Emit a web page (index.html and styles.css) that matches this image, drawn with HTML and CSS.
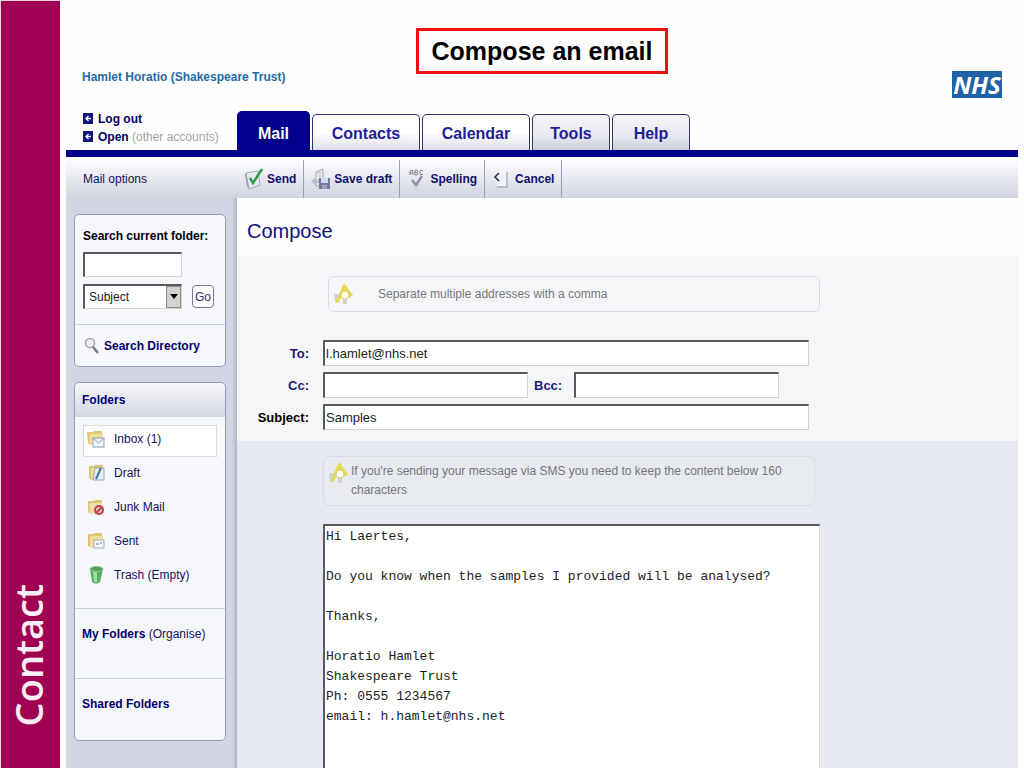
FILE: index.html
```html
<!DOCTYPE html>
<html lang="en">
<head>
    <meta charset="UTF-8">
    <meta name="viewport" content="width=device-width, initial-scale=1.0">
    <title>Compose an email</title>
    <link rel="stylesheet" href="styles.css">
</head>
<body>
    <!-- Section rail -->
    <aside class="rail"><span class="rail-text">Contact</span></aside>

    <div class="app">
        <!-- Header: user, page callout, logo -->
        <header class="top">
            <p class="user">Hamlet Horatio (Shakespeare Trust)</p>
            <h1 class="callout">Compose an email</h1>
            <div class="nhs">NHS</div>
        </header>

        <div class="nav-row">
            <div class="account">
                <a href="#"><svg class="arrow" viewBox="0 0 10 11"><rect width="10" height="11" fill="#14147c"/><path d="M8 5.500H3M5.500 3L3 5.500L5.500 8" fill="none" stroke="#fff" stroke-width="1.300"/></svg><b>Log out</b></a>
                <a href="#"><svg class="arrow" viewBox="0 0 10 11"><rect width="10" height="11" fill="#14147c"/><path d="M8 5.500H3M5.500 3L3 5.500L5.500 8" fill="none" stroke="#fff" stroke-width="1.300"/></svg><b>Open</b> <span>(other accounts)</span></a>
            </div>
            <nav class="tabs">
                <a class="tab tab-active" href="#">Mail</a>
                <a class="tab tab-wide" href="#">Contacts</a>
                <a class="tab tab-wide" href="#">Calendar</a>
                <a class="tab tab-grey" href="#">Tools</a>
                <a class="tab tab-grey" href="#">Help</a>
            </nav>
        </div>

        <!-- Toolbar -->
        <div class="toolbar">
            <a class="options" href="#">Mail options</a>
            <button class="tool" type="button">
                <svg class="tool-icon" viewBox="0 0 20 24"><path d="M2 6L14 4L16 18L5 22Z" fill="#e6e9ee" stroke="#a4a9b5"/><path d="M2 6L5 22L3 19L1 8Z" fill="#999faa"/><path d="M6 11L9 16L18 2" fill="none" stroke="#2f9a4c" stroke-width="2.500"/></svg>
                Send
            </button>
            <button class="tool" type="button">
                <svg class="tool-icon" viewBox="0 0 20 24"><path d="M5 5L12 2V19H5Z" fill="#eceef2" stroke="#9ea3ae"/><path d="M7 6H10M7 9H10M7 12H10" stroke="#a5aab4"/><path d="M0 14L5 10V13H9V16H5V19Z" fill="#b9bec8"/><rect x="8" y="11" width="11" height="11" fill="#737aa6"/><rect x="10" y="11" width="7" height="5" fill="#d3d6e5"/><rect x="11" y="18" width="5" height="4" fill="#9ba1bf"/></svg>
                Save draft
            </button>
            <button class="tool" type="button">
                <svg class="tool-icon" viewBox="0 0 20 24"><path d="M3 8V4L5 3L6 4V8M3 6H6M8 3V8H10L11 7L10 5.500H8M8 3H10L11 4L10 5.500M16 4L14 3L13 4V7L14 8L16 7" fill="none" stroke="#84878f"/><path d="M5 13L9 18L15 9" fill="none" stroke="#8990a3" stroke-width="2.500"/><path d="M6 18L9 21L13 17" fill="none" stroke="#d0d3da" stroke-width="2"/></svg>
                Spelling
            </button>
            <button class="tool" type="button">
                <svg class="tool-icon" viewBox="0 0 20 24"><path d="M4 4H15V19H5Z" fill="#f2f3f7"/><path d="M15 5V20H5" fill="none" stroke="#aeb3c0" stroke-width="1.500"/><path d="M7 6L3 10L7 14" fill="none" stroke="#22266b" stroke-width="1.500"/></svg>
                Cancel
            </button>
        </div>

        <div class="columns">
            <!-- Sidebar -->
            <div class="sidebar">
                <form class="panel">
                    <div class="search">
                        <label for="search">Search current folder:</label>
                        <input class="field search-field" type="text" id="search">
                        <div class="search-row">
                            <div class="select-wrap">
                                <select class="field" aria-label="Search in">
                                    <option>Subject</option>
                                    <option>Sender</option>
                                </select>
                                <span class="select-arrow"></span>
                            </div>
                            <button class="go" type="button">Go</button>
                        </div>
                    </div>
                    <a class="directory" href="#">
                        <svg class="lens" viewBox="0 0 16 18"><circle cx="6" cy="6" r="4.500" fill="#eef2f5" stroke="#a1a5ab" stroke-width="1.500"/><path d="M9 10L14 16" stroke="#777b80" stroke-width="2.500"/></svg>
                        Search Directory
                    </a>
                </form>

                <div class="panel">
                    <h2 class="panel-title">Folders</h2>
                    <ul class="folders">
                        <li class="current"><a href="#">
                            <svg class="folder-icon" viewBox="0 0 20 20"><path d="M1 3H6L8 2H16V13L4 16L2 14Z" fill="#e2ca78"/><path d="M4 5H17V14L4 16Z" fill="#f0dea0"/><rect x="7" y="9" width="11" height="9" fill="#eef4fb" stroke="#8aa0bd"/><path d="M7 9L12.500 14L18 9" fill="none" stroke="#8aa0bd"/></svg>
                            Inbox (1)</a></li>
                        <li><a href="#">
                            <svg class="folder-icon" viewBox="0 0 20 20"><path d="M3 3H7L9 2H17V14L5 17L3 15Z" fill="#dcc474"/><path d="M5 5H12V16L5 17Z" fill="#f0dea0"/><path d="M9 5H18V17H7Z" fill="#e6eef3" stroke="#9ba9ae"/><path d="M10 16L15 5" stroke="#2d7e92" stroke-width="2"/></svg>
                            Draft</a></li>
                        <li><a href="#">
                            <svg class="folder-icon" viewBox="0 0 20 20"><path d="M2 4H7L9 3H16V15H4L2 16Z" fill="#dcc474"/><path d="M4 6H16V16L3 17Z" fill="#efdda3"/><rect x="8" y="8" width="10" height="10" fill="#e7dce0"/><circle cx="13" cy="13" r="4" fill="#efc7c5" stroke="#c3444a" stroke-width="2"/><path d="M10 16L16 10" stroke="#c3444a" stroke-width="2"/></svg>
                            Junk Mail</a></li>
                        <li><a href="#">
                            <svg class="folder-icon" viewBox="0 0 20 20"><path d="M2 3H7L9 2H16V14L4 16L2 15Z" fill="#dcc474"/><path d="M4 5H17V15L4 17Z" fill="#f0dea0"/><rect x="8" y="9" width="10" height="8" fill="#f6f8fb" stroke="#9aabb8"/><path d="M10 13H13M15 11V13" stroke="#4c6e94"/></svg>
                            Sent</a></li>
                        <li><a href="#">
                            <svg class="folder-icon" viewBox="0 0 20 20"><path d="M4 4L6 17Q10 20 14 17L17 4Z" fill="#58ae60"/><path d="M7 7L8 17H11L11 7Z" fill="#a2dda0"/><ellipse cx="10.500" cy="4" rx="6.500" ry="2.500" fill="#5b9e60" stroke="#8aca88"/></svg>
                            Trash (Empty)</a></li>
                    </ul>
                    <div class="group"><a href="#"><b>My Folders</b> (Organise)</a></div>
                    <div class="group"><a href="#"><b>Shared Folders</b></a></div>
                </div>
            </div>

            <!-- Compose form -->
            <form class="compose">
                <h2 class="compose-title">Compose</h2>

                <div class="recipients">
                    <p class="hint hint-address">
                        <svg class="bulb" viewBox="0 0 20 22"><path d="M0 11H7L5 20L1 19Z" fill="#cfd1d4"/><path d="M10 0L19 12L15 15L10 8L5 19L1 20L6 9Z" fill="#e8da4a"/><circle cx="11" cy="12" r="4" fill="#fffef2" stroke="#d7cf7a"/><path d="M9 16H13V21H9Z" fill="#d8d5bd"/></svg>
                        Separate multiple addresses with a comma
                    </p>
                    <div class="fields">
                        <label for="to">To:</label>
                        <input class="field" type="text" id="to" value="l.hamlet@nhs.net">
                        <label for="cc">Cc:</label>
                        <div class="pair">
                            <input class="field" type="text" id="cc">
                            <label for="bcc">Bcc:</label>
                            <input class="field" type="text" id="bcc">
                        </div>
                        <label class="black" for="subject">Subject:</label>
                        <input class="field" type="text" id="subject" value="Samples">
                    </div>
                </div>

                <div class="message">
                    <p class="hint">
                        <svg class="bulb" viewBox="0 0 20 22"><path d="M0 11H7L5 20L1 19Z" fill="#cfd1d4"/><path d="M10 0L19 12L15 15L10 8L5 19L1 20L6 9Z" fill="#e8da4a"/><circle cx="11" cy="12" r="4" fill="#fffef2" stroke="#d7cf7a"/><path d="M9 16H13V21H9Z" fill="#d8d5bd"/></svg>
                        If you're sending your message via SMS you need to keep the content below 160 characters
                    </p>
                    <textarea class="field body-text" aria-label="Message">Hi Laertes,

Do you know when the samples I provided will be analysed?

Thanks,

Horatio Hamlet
Shakespeare Trust
Ph: 0555 1234567
email: h.hamlet@nhs.net</textarea>
                </div>
            </form>
        </div>
    </div>
</body>
</html>
```
FILE: styles.css
```css
* {
    box-sizing: border-box;
    margin: 0;
    padding: 0;
}

body {
    display: flex;
    min-height: 100vh;
    background-color: #fefefe;
    font-family: "Liberation Sans", Arial, sans-serif;
    font-size: 12px;
    line-height: 18px;
    color: #14145a;
}

a {
    color: inherit;
    text-decoration: none;
}

input, select, textarea, button {
    font: inherit;
    border-radius: 0;
}

/* Section rail */
.rail {
    display: flex;
    flex: none;
    align-items: flex-end;
    justify-content: center;
    width: 60px;
    padding: 0 6px 42px 0;
    background-color: #a00052;
    border-top: 1px solid #e6d3dd;
    border-left: 1px solid #e6d3dd;
}

.rail-text {
    writing-mode: vertical-rl;
    transform: rotate(180deg);
    font-family: "Open Sans", "Noto Sans", sans-serif;
    font-size: 38px;
    font-weight: 600;
    line-height: 48px;
    color: #fbeef5;
}

.app {
    display: flex;
    flex: 1;
    flex-direction: column;
    min-width: 0;
    margin: 0 6px;
}

/* Header */
.top {
    display: grid;
    grid-template-columns: 1fr auto 1fr;
    align-items: start;
    padding: 28px 16px 0;
}

.user {
    padding-top: 40px;
    font-weight: bold;
    color: #1f6ba5;
}

.callout {
    padding: 0 13px;
    border: 3px solid #ee1111;
    font-size: 25px;
    line-height: 40px;
    color: #000;
}

.nhs {
    justify-self: end;
    width: 50px;
    margin-top: 43px;
    background-color: #2161a8;
    font-family: "Open Sans", "Noto Sans", sans-serif;
    font-size: 24px;
    font-style: italic;
    font-weight: bold;
    line-height: 27px;
    text-align: center;
    color: #fff;
}

/* Account links and tabs */
.nav-row {
    display: flex;
    align-items: flex-end;
    height: 59px;
    border-bottom: 7px solid #00008a;
    border-radius: 3px 3px 0 0;
}

.account {
    display: flex;
    flex-direction: column;
    width: 171px;
    padding: 0 0 4px 17px;
    color: #000066;
    white-space: nowrap;
}

.account span {
    color: #a3a3a3;
}

.arrow {
    width: 10px;
    height: 11px;
    margin-right: 5px;
    vertical-align: -1px;
}

.tabs {
    display: flex;
    align-items: flex-end;
    gap: 2px;
}

.tab {
    width: 78px;
    height: 36px;
    border: 1px solid #34346c;
    border-bottom: 0;
    border-radius: 5px 5px 0 0;
    background: linear-gradient(#fff 50%, #dcdde6);
    font-size: 16px;
    font-weight: bold;
    line-height: 37px;
    text-align: center;
    color: #241c9a;
}

.tab-wide {
    width: 108px;
}

.tab-grey {
    background: linear-gradient(#f4f4f9, #e8e9f1 60%, #ccced8);
}

.tab-active {
    width: 73px;
    height: 39px;
    border-color: #00008a;
    background: #00008a;
    line-height: 43px;
    color: #fff;
}

/* Toolbar */
.toolbar {
    display: flex;
    height: 41px;
    padding-top: 3px;
    background: linear-gradient(#fafbfd 10%, #d0d4df);
}

.options {
    width: 171px;
    padding-left: 17px;
    line-height: 39px;
}

.tool {
    display: flex;
    align-items: center;
    gap: 3px;
    padding: 0 7px;
    border: 0;
    border-right: 1px solid #9a9db8;
    background: none;
    font-weight: bold;
    color: #10106c;
}

.tool-icon {
    width: 20px;
    height: 24px;
}

.columns {
    display: flex;
    flex: 1;
}

/* Sidebar */
.sidebar {
    display: flex;
    flex: none;
    flex-direction: column;
    gap: 15px;
    width: 171px;
    padding: 16px 11px 26px 8px;
    background: linear-gradient(to right, #d2d6e2 166px, #b0b4c4);
}

.panel {
    border: 1px solid #969cb8;
    border-radius: 5px;
    background-color: #f6f7fa;
}

.search {
    display: flex;
    flex-direction: column;
    gap: 7px;
    padding: 12px 7px 15px 8px;
}

.search label {
    font-weight: bold;
    white-space: nowrap;
    color: #000;
}

.field {
    width: 100%;
    height: 26px;
    padding: 0 1px;
    border: 1px solid #d4d4d0;
    border-top: 2px solid #5a5a5e;
    border-left: 2px solid #5a5a5e;
    outline: none;
    background-color: #fff;
    color: #222;
}

.search-field {
    width: 99px;
    height: 25px;
}

.search-row {
    display: flex;
    gap: 10px;
    align-items: center;
}

.select-wrap {
    position: relative;
    width: 99px;
}

.select-wrap select {
    display: block;
    height: 25px;
    padding-left: 4px;
    appearance: none;
}

/* Drop-down button over the select */
.select-arrow {
    position: absolute;
    top: 2px;
    right: 1px;
    width: 15px;
    height: 22px;
    border: 1px solid #8a8a86;
    background-color: #d4d2cc;
    pointer-events: none;
}

.select-arrow::after {
    content: "";
    position: absolute;
    top: 7px;
    left: 3px;
    border: 4px solid transparent;
    border-top: 5px solid #000;
    border-bottom: 0;
}

.go {
    width: 22px;
    height: 23px;
    border: 1px solid #777a90;
    border-radius: 4px;
    background-color: #fbfbfd;
    color: #333366;
}

.directory {
    display: flex;
    align-items: center;
    gap: 4px;
    height: 42px;
    padding-left: 9px;
    border-top: 1px solid #cdd1dc;
    font-weight: bold;
    color: #000070;
}

.lens {
    width: 16px;
    height: 18px;
}

.panel-title {
    padding-left: 7px;
    border-radius: 5px 5px 0 0;
    background: linear-gradient(#f6f7fa, #d3d7e1);
    font-size: 12px;
    line-height: 34px;
    color: #000080;
}

.folders {
    display: flex;
    flex-direction: column;
    gap: 2px;
    padding: 8px 8px 15px;
    list-style: none;
}

.folders li {
    height: 32px;
    border: 1px solid transparent;
}

.folders .current {
    border-color: #d8dae0;
    background-color: #fff;
}

.folders a {
    display: flex;
    align-items: center;
    gap: 8px;
    height: 26px;
    padding-left: 2px;
}

.folder-icon {
    width: 20px;
    height: 20px;
}

.group {
    height: 70px;
    padding: 16px 7px;
    border-top: 1px solid #cdd1dc;
    white-space: nowrap;
}

.group b {
    color: #000070;
}

.group:last-child {
    height: 62px;
}

/* Compose form */
.compose {
    display: flex;
    flex: 1;
    flex-direction: column;
    min-width: 0;
}

.compose-title {
    height: 58px;
    padding-left: 10px;
    font-size: 20px;
    font-weight: normal;
    line-height: 67px;
    color: #101078;
}

.recipients {
    padding: 20px 0 11px;
    background-color: #f4f6f8;
}

.hint {
    display: flex;
    gap: 2px;
    max-width: 492px;
    margin: 0 8px 0 86px;
    padding: 5px 30px 5px 5px;
    border: 1px solid #d8dbe1;
    border-radius: 6px;
    line-height: 19px;
    color: #74767c;
}

.hint-address {
    gap: 24px;
    align-items: center;
    margin-left: 91px;
    height: 36px;
}

.bulb {
    flex: none;
    width: 20px;
    height: 22px;
}

.fields {
    display: grid;
    grid-template-columns: 72px minmax(0, 486px);
    gap: 6px 14px;
    align-items: center;
    margin-top: 28px;
}

.fields label {
    padding-top: 2px;
    font-size: 13px;
    font-weight: bold;
    text-align: right;
    color: #1c1c70;
}

.fields .field {
    font-size: 13px;
}

.fields .black {
    color: #000;
}

.pair {
    display: grid;
    grid-template-columns: 205px 46px 205px;
    align-items: center;
}

.pair label {
    padding-left: 6px;
    text-align: left;
}

.message {
    display: flex;
    flex: 1;
    flex-direction: column;
    padding-top: 15px;
    background-color: #e6e9f2;
}

.message .hint {
    background-color: #e7eaee;
}

.body-text {
    display: block;
    flex: 1;
    width: auto;
    max-width: 497px;
    min-height: 244px;
    margin: 18px 8px 0 86px;
    padding-top: 1px;
    border-bottom: 0;
    font-family: "Liberation Mono", "Courier New", monospace;
    font-size: 13px;
    line-height: 20px;
    resize: none;
}
```
